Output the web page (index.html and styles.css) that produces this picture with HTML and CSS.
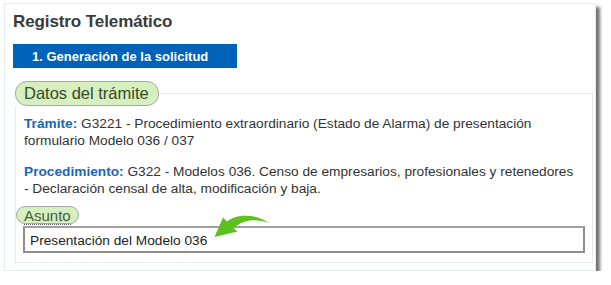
FILE: index.html
```html
<!DOCTYPE html>
<html lang="es">
<head>
    <meta charset="UTF-8">
    <meta name="viewport" content="width=device-width, initial-scale=1.0">
    <title>Registro Telemático</title>
    <link rel="stylesheet" href="styles.css">
</head>
<body>
    <div class="card">
        <p class="title">Registro Telemático</p>
        <div class="step">1. Generación de la solicitud</div>
        <fieldset class="datos">
            <legend class="pill">Datos del trámite</legend>
            <div class="datos-body">
                <p class="info"><span class="label">Trámite:</span> G3221 - Procedimiento extraordinario (Estado de Alarma) de presentación formulario Modelo 036 / 037</p>
                <p class="info"><span class="label">Procedimiento:</span> G322 - Modelos 036. Censo de empresarios, profesionales y retenedores - Declaración censal de alta, modificación y baja.</p>
            </div>
            <div class="asunto">
                <span class="pill pill-small"><span class="dotted">Asunto</span></span>
                <div class="field">
                    <div class="input">Presentación del Modelo 036</div>
                    <svg class="arrow" width="60" height="28" viewBox="0 0 60 28">
                        <path d="M1.5 23 L10 3.5 L14 7.5 C24 -0.5 42 -0.5 56 9 C42 4 30 6 20.5 14 L24.5 17.5 Z" fill="#5cc01e"/>
                    </svg>
                </div>
            </div>
        </fieldset>
    </div>
</body>
</html>
```

FILE: styles.css
```css
body {
    margin: 0;
    padding: 3px 0 0 4px;
    background-color: white;
    font-family: "Liberation Sans", Arial, sans-serif;
    color: #333;
}
.card {
    width: 592px;
    height: 268px;
    box-sizing: border-box;
    border: 1px solid #e6ebf0;
    box-shadow: 4px 4px 3px rgba(0, 0, 0, 0.55);
    padding: 8px 3px 0 8px;
    background-color: white;
}
.title {
    margin: 0;
    font-size: 17px;
    font-weight: bold;
    color: #3a3a3a;
    letter-spacing: -0.1px;
}
.step {
    width: 224px;
    height: 24px;
    margin-top: 12px;
    box-sizing: border-box;
    padding: 5px 0 0 19px;
    background-color: #0062b8;
    color: white;
    font-size: 13px;
    font-weight: bold;
}
.datos {
    margin: 13px 0 0 2px;
    padding: 0;
    border: 1px solid #e3eaf2;
    width: 578px;
    box-sizing: border-box;
    height: 182px;
}
.pill {
    display: inline-block;
    background-color: #d6efbf;
    border: 1.5px solid #a8a8a8;
    border-radius: 12px;
    color: #34492a;
}
.datos > legend {
    font-size: 16.5px;
    padding: 2px 9px 2px 8px;
    margin-left: -1px;
}
.datos-body {
    padding: 0 12px 0 8px;
}
.info {
    margin: 9px 0 14px 0;
    font-size: 13.7px;
    line-height: 17px;
    color: #333;
}
.label {
    color: #1a66b8;
    font-weight: bold;
}
.asunto {
    margin-top: -5px;
}
.pill-small {
    font-size: 15px;
    padding: 0 7px 0 7px;
    border-radius: 10px;
    height: 18px;
    line-height: 17px;
    box-sizing: border-box;
    color: #4a5a40;
}
.dotted {
    border-bottom: 1px dotted #555;
}
.field {
    position: relative;
    margin: 1px 0 0 7px;
}
.input {
    width: 562px;
    height: 27px;
    box-sizing: border-box;
    border: 2px solid #8c8c8c;
    border-top-color: #a0a0a0;
    padding: 5px 5px;
    font-size: 13.7px;
    color: #222;
}
.arrow {
    position: absolute;
    left: 190px;
    top: -12px;
}
```
